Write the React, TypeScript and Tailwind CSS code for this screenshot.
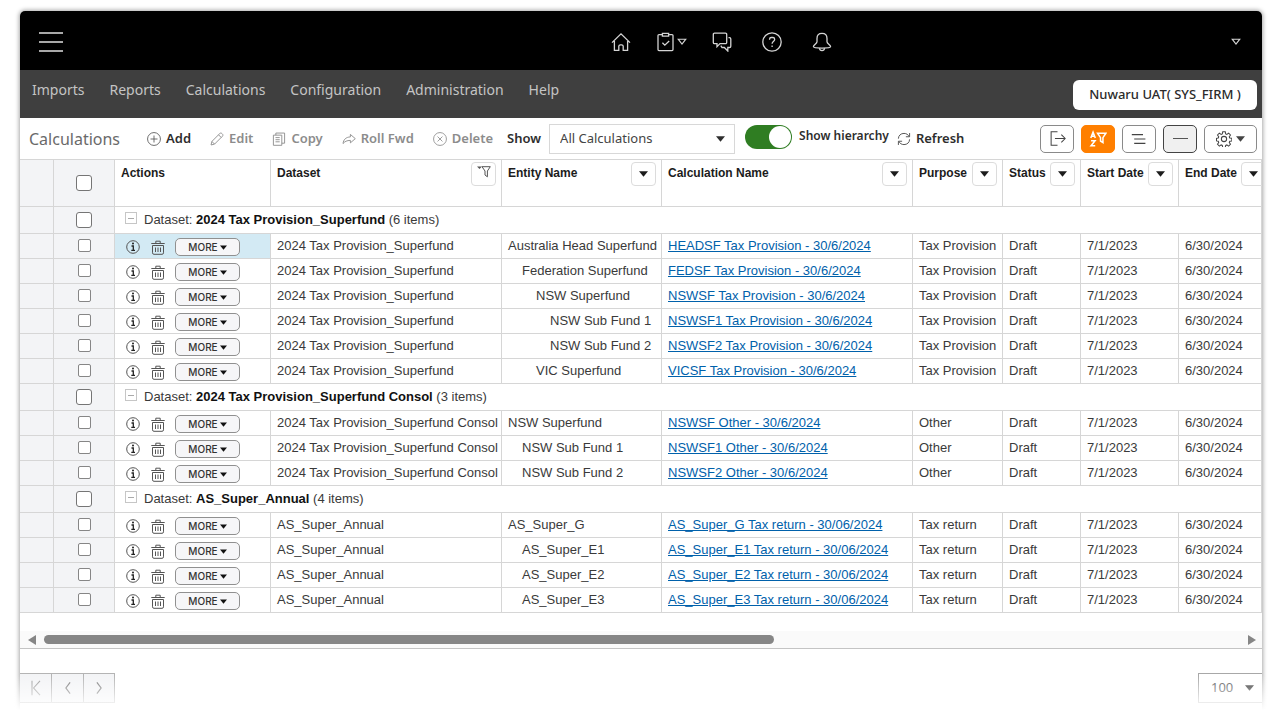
import React from 'react';
import clsx from 'clsx';

interface CalculationRow {
  entity: string
  level: number
  name: string
}

interface DatasetGroup {
  dataset: string
  purpose: string
  rows: CalculationRow[]
}

const menus = ['Imports', 'Reports', 'Calculations', 'Configuration', 'Administration', 'Help'];

const groups: DatasetGroup[] = [
  {
    dataset: '2024 Tax Provision_Superfund',
    purpose: 'Tax Provision',
    rows: [
      { entity: 'Australia Head Superfund', level: 0, name: 'HEADSF Tax Provision - 30/6/2024' },
      { entity: 'Federation Superfund', level: 1, name: 'FEDSF Tax Provision - 30/6/2024' },
      { entity: 'NSW Superfund', level: 2, name: 'NSWSF Tax Provision - 30/6/2024' },
      { entity: 'NSW Sub Fund 1', level: 3, name: 'NSWSF1 Tax Provision - 30/6/2024' },
      { entity: 'NSW Sub Fund 2', level: 3, name: 'NSWSF2 Tax Provision - 30/6/2024' },
      { entity: 'VIC Superfund', level: 2, name: 'VICSF Tax Provision - 30/6/2024' },
    ],
  },
  {
    dataset: '2024 Tax Provision_Superfund Consol',
    purpose: 'Other',
    rows: [
      { entity: 'NSW Superfund', level: 0, name: 'NSWSF Other - 30/6/2024' },
      { entity: 'NSW Sub Fund 1', level: 1, name: 'NSWSF1 Other - 30/6/2024' },
      { entity: 'NSW Sub Fund 2', level: 1, name: 'NSWSF2 Other - 30/6/2024' },
    ],
  },
  {
    dataset: 'AS_Super_Annual',
    purpose: 'Tax return',
    rows: [
      { entity: 'AS_Super_G', level: 0, name: 'AS_Super_G Tax return - 30/06/2024' },
      { entity: 'AS_Super_E1', level: 1, name: 'AS_Super_E1 Tax return - 30/06/2024' },
      { entity: 'AS_Super_E2', level: 1, name: 'AS_Super_E2 Tax return - 30/06/2024' },
      { entity: 'AS_Super_E3', level: 1, name: 'AS_Super_E3 Tax return - 30/06/2024' },
    ],
  },
];

const indents = ['pl-[6px]', 'pl-[20px]', 'pl-[34px]', 'pl-[48px]'];

const columns = [
  { title: 'Dataset', icon: 'filter' },
  { title: 'Entity Name', icon: 'caret' },
  { title: 'Calculation Name', icon: 'caret' },
  { title: 'Purpose', icon: 'caret' },
  { title: 'Status', icon: 'caret' },
  { title: 'Start Date', icon: 'caret' },
  { title: 'End Date', icon: 'caret' },
];

interface IconProps {
  size?: number
  width?: number
  className?: string
  children: React.ReactNode
}

function Icon({ size = 16, width = 1, className, children }: IconProps) {
  return (
    <svg
      width={size}
      height={size}
      viewBox="0 0 20 20"
      fill="none"
      stroke="currentColor"
      strokeWidth={width}
      className={clsx('shrink-0', className)}
      aria-hidden="true"
    >
      {children}
    </svg>
  );
}

function Caret({ className = 'h-[6px] w-[9px]' }: { className?: string }) {
  return (
    <svg viewBox="0 0 9 6" className={clsx('shrink-0', className)} fill="currentColor" aria-hidden="true">
      <path d="M0 0.3h9L4.5 5.8z" />
    </svg>
  );
}

function HollowCaret() {
  return (
    <svg viewBox="0 0 10 8" className="h-2 w-[10px] shrink-0" fill="none" stroke="currentColor" strokeWidth="1.1" aria-hidden="true">
      <path d="M1.2 1.2h7.6L5 6.2z" />
    </svg>
  );
}

function CheckBox({ label, large = false }: { label: string, large?: boolean }) {
  return (
    <input
      type="checkbox"
      aria-label={label}
      className={clsx(
        'block appearance-none border bg-white',
        large ? 'size-4 rounded-[3px] border-[#757575]' : 'mb-[2px] size-[13px] rounded-[2px] border-[#868686]',
      )}
    />
  );
}

function TopBar() {
  return (
    <header className="flex h-[59px] items-center bg-black pt-[3px] pr-[21px] pl-[19px] text-[#d4d4d4]">
      <button type="button" aria-label="Menu" className="flex w-6 flex-col gap-[7px]">
        <span className="h-[2px] bg-[#a8a8a8]" />
        <span className="h-[2px] bg-[#a8a8a8]" />
        <span className="h-[2px] bg-[#a8a8a8]" />
      </button>
      <div className="ml-[45.6%] flex items-center gap-[25px]">
        <button type="button" aria-label="Home">
          <Icon size={20} width={1.3}>
            <path d="M1 10.6L10 1.8l9 8.8M3.4 9v9.4h4.4v-4.2a1.6 1.6 0 0 1 1.6-1.4h1.2a1.6 1.6 0 0 1 1.6 1.4v4.2h4.4V9" />
          </Icon>
        </button>
        <button type="button" aria-label="Tasks" className="flex items-center gap-px">
          <Icon size={20} width={1.3}>
            <path d="M6.4 2.6H3a1 1 0 0 0-1 1v14a1 1 0 0 0 1 1h13a1 1 0 0 0 1-1v-14a1 1 0 0 0-1-1h-3.4M6.4 1.4h6.2v2.8H6.4zM6.4 10.8l2.4 2.4 4.4-4.2" />
          </Icon>
          <HollowCaret />
        </button>
        <button type="button" aria-label="Messages">
          <Icon size={20} width={1.3}>
            <path d="M2.5 1.2h11a1.2 1.2 0 0 1 1.2 1.2v8a1.2 1.2 0 0 1-1.2 1.2H8l-3 3v-3H2.5a1.2 1.2 0 0 1-1.2-1.2v-8a1.2 1.2 0 0 1 1.2-1.2z" />
            <path d="M16.5 5.6h1a1.3 1.3 0 0 1 1.3 1.3v7.3a1.3 1.3 0 0 1-1.3 1.3h-1.7v3.5l-3.5-3.5H10l-1.2-1.8" />
          </Icon>
        </button>
        <button type="button" aria-label="Help" className="ml-[5px]">
          <Icon size={20} width={1.3}>
            <circle cx="10" cy="10" r="9.2" />
            <path d="M7.6 7.7V7a1.6 1.6 0 0 1 1.6-1.5h1.8A1.6 1.6 0 0 1 12.6 7v.8c0 1.4-2.5 1.7-2.5 4M10.1 13.6v1.4" />
          </Icon>
        </button>
        <button type="button" aria-label="Notifications" className="ml-[5px]">
          <Icon size={20} width={1.3}>
            <path d="M10 1.4c-3.2 0-5 2.2-5 5v3.4c0 2-3.6 3-3.6 5 0 .6 2 1.3 8.6 1.3s8.6-.7 8.6-1.3c0-2-3.6-3-3.6-5V6.4c0-2.8-1.8-5-5-5z" />
            <path d="M7.4 16.2c.2 1.5 1.2 2.5 2.6 2.5s2.4-1 2.6-2.5" />
          </Icon>
        </button>
      </div>
      <button type="button" aria-label="Account" className="ml-auto"><HollowCaret /></button>
    </header>
  );
}

function MenuBar() {
  return (
    <nav className="flex h-12 items-start justify-between bg-[#3f3f3f] pr-[5px] pl-3 font-['Noto_Sans',sans-serif]">
      <div className="flex gap-[25px] pt-[10px] text-sm leading-5 text-[#c4c4c4]">
        {menus.map((menu) => (
          <a key={menu} href="#">{menu}</a>
        ))}
      </div>
      <button type="button" className="mt-[10px] h-[30px] w-[184px] rounded-md bg-white text-[13px] font-medium text-[#2b2b2b]">
        Nuwaru UAT( SYS_FIRM )
      </button>
    </nav>
  );
}

interface ToolButtonProps {
  label: string
  active?: boolean
  children: React.ReactNode
}

function ToolButton({ label, active = false, children }: ToolButtonProps) {
  return (
    <button
      type="button"
      className={clsx('flex items-center gap-[5px] font-semibold whitespace-nowrap', active ? 'text-[#2e2e2e]' : 'text-[#8c8c8c]')}
    >
      {children}
      {label}
    </button>
  );
}

function Toolbar() {
  const square = 'flex h-7 w-[34px] items-center justify-center rounded-[5px] border';

  return (
    <div className="flex h-[41px] items-center justify-between pr-[5px] pl-[9px] font-['Noto_Sans',sans-serif] text-[13px] text-[#2e2e2e]">
      <div className="flex items-center">
        <h1 className="mr-[27px] text-base text-[#6a6a6a]">Calculations</h1>
        <div className="flex items-center gap-[19px]">
          <ToolButton label="Add" active>
            <Icon size={14} width={1.2} className="text-[#555]">
              <circle cx="10" cy="10" r="9.2" />
              <path d="M10 5v10M5 10h10" />
            </Icon>
          </ToolButton>
          <ToolButton label="Edit">
            <Icon size={14} width={1.3}>
              <path d="M1.5 18.5l1.2-5L14 2.2c.9-.9 2.2-.9 3 0l.8.8c.8.8.8 2.1 0 3L6.5 17.3zM12.2 4l3.8 3.8M2.7 13.5l3.8 3.8" />
            </Icon>
          </ToolButton>
          <ToolButton label="Copy">
            <Icon size={14} width={1.3}>
              <path d="M2 4.5h12V19H2zM5.5 4.5v-3H18V16h-4M5 8h6M5 11h6M5 14h6" />
            </Icon>
          </ToolButton>
          <ToolButton label="Roll Fwd">
            <Icon size={14} width={1.3}>
              <path d="M12 3.5l7 6-7 6V12c-5 0-8 1.5-10.500 4.500.5-5.500 4-9.200 10.500-9.500z" />
            </Icon>
          </ToolButton>
          <ToolButton label="Delete">
            <Icon size={14} width={1.2}>
              <circle cx="10" cy="10" r="9.2" />
              <path d="M6.5 6.5l7 7M13.5 6.5l-7 7" />
            </Icon>
          </ToolButton>
        </div>
        <label htmlFor="show" className="mr-2 ml-[14px] font-semibold">Show</label>
        <div className="relative">
          <select id="show" className="h-[30px] w-[186px] appearance-none border border-[#d8d8d8] bg-white pl-[10px] text-[13px] text-[#444]">
            <option>All Calculations</option>
          </select>
          <Caret className="pointer-events-none absolute top-3 right-[10px] h-[6px] w-[9px]" />
        </div>
        <input
          id="hierarchy"
          type="checkbox"
          role="switch"
          defaultChecked
          className="mr-[7px] mb-1 ml-[10px] flex h-6 w-[47px] appearance-none items-center justify-end rounded-full bg-[#2f7d22] p-px before:size-[22px] before:rounded-full before:bg-white"
        />
        <label htmlFor="hierarchy" className="mr-2 mb-[6px] text-xs font-semibold whitespace-nowrap">Show hierarchy</label>
        <ToolButton label="Refresh" active>
          <Icon size={14} width={1.4} className="text-[#555]">
            <path d="M2 9.5C2 5 5.500 2 10 2c3.500 0 6 1.800 7.300 4.500M18 1.500v5.300h-5.300M18 10.500c0 4.500-3.500 7.500-8 7.500-3.500 0-6-1.800-7.300-4.500M2 18.500v-5.300h5.300" />
          </Icon>
        </ToolButton>
      </div>
      <div className="flex items-center gap-[7px] text-[#444]">
        <button type="button" aria-label="Export" className={clsx(square, 'border-[#8a8a8a]')}>
          <Icon size={17} width={1.2}>
            <path d="M10 2H2.5v16H10M7 10h12M14.5 5.5L19 10l-4.5 4.5" />
          </Icon>
        </button>
        <button type="button" aria-label="Sort and filter" className={clsx(square, 'border-[#ff7f00] bg-[#ff7f00] text-white')}>
          <Icon size={18} width={1.7}>
            <path d="M2 9l2.5-6.5L7 9M2.8 7h3.4M2.3 12h4.4l-4.4 5.5h4.6M9.5 3.5h9.3l-3.3 5V14l-2.7-1.8V8.5z" />
          </Icon>
        </button>
        <button type="button" aria-label="Row density" className={clsx(square, 'border-[#8a8a8a]')}>
          <Icon size={16} width={1.5}>
            <path d="M1 4.5h14M4 10h14M4 15.5h14" />
          </Icon>
        </button>
        <button type="button" aria-label="Collapse all" className={clsx(square, 'border-[#444] bg-[#f0f0f0]')}>
          <span className="h-px w-[15px] bg-[#555]" />
        </button>
        <button type="button" aria-label="Settings" className="flex h-7 w-[53px] items-center justify-center gap-1 rounded-[5px] border border-[#8a8a8a]">
          <Icon size={16} width={1.3}>
            <path d="M8.4 1h3.2l.5 2.6 1.500.6 2.200-1.500 2.300 2.300-1.500 2.200.6 1.500 2.600.5v3.200l-2.600.5-.6 1.500 1.500 2.200-2.300 2.300-2.200-1.500-1.500.6-.5 2.600H8.400l-.5-2.600-1.500-.6-2.200 1.500-2.300-2.300 1.500-2.200-.6-1.500L.600 12.400V9.200l2.200-.5.6-1.500L1.900 5l2.300-2.300 2.200 1.500 1.500-.6z" />
            <circle cx="10" cy="10" r="3.3" />
          </Icon>
          <Caret />
        </button>
      </div>
    </div>
  );
}

function RowActions() {
  return (
    <div className="flex items-center pt-[2px] pl-[11px] text-[#555]">
      <button type="button" aria-label="Info">
        <svg width="14" height="14" viewBox="0 0 14 14" fill="none" stroke="currentColor" aria-hidden="true">
          <circle cx="7" cy="7" r="6.3" />
          <path d="M5.5 6h1.8v4.3M5.3 10.3h3.7" stroke="#222" strokeWidth="1.3" />
          <circle cx="7" cy="3.6" r="1" fill="#222" stroke="none" />
        </svg>
      </button>
      <button type="button" aria-label="Delete" className="ml-[11px]">
        <svg width="14" height="15" viewBox="0 0 14 15" fill="none" stroke="currentColor" aria-hidden="true">
          <path d="M.3 3.5h13.4M4.8 3.3V1.200h4.400v2.100M1.500 5.500v7.300a1.500 1.500 0 0 0 1.500 1.500h8a1.500 1.500 0 0 0 1.500-1.500V5.500zM4.500 7.500v4.500M7 7.500v4.500M9.500 7.500v4.500" />
        </svg>
      </button>
      <button
        type="button"
        className="ml-[10px] flex h-[18px] w-[65px] items-center justify-center gap-[2px] rounded-[5px] border border-[#909090] bg-[#f6f6f8] font-['Inter',sans-serif] text-[10px] font-medium text-[#333]"
      >
        MORE
        <Caret className="h-[5px] w-[7px] text-[#111]" />
      </button>
    </div>
  );
}

function DatasetRows({ group, first }: { group: DatasetGroup, first: boolean }) {
  const cell = 'border-r border-b border-[#d6d6d6] whitespace-nowrap';
  const gutter = clsx(cell, 'bg-[#f3f4f6]');

  return (
    <tbody>
      <tr className="h-[27px]">
        <td className={gutter} />
        <td className={clsx(gutter, 'pl-[22px]')}><CheckBox large label={`Select ${group.dataset}`} /></td>
        <td colSpan={8} className={clsx(cell, 'pl-[10px]')}>
          <div className="flex items-center gap-[7px]">
            <button type="button" aria-label="Collapse" className="mb-1 flex size-3 items-center justify-center border border-[#c6c6c6]">
              <span className="h-px w-[6px] bg-[#aaa]" />
            </button>
            <p>
              {'Dataset: '}
              <b className="text-[#111]">{group.dataset}</b>
              {` (${group.rows.length} items)`}
            </p>
          </div>
        </td>
      </tr>
      {group.rows.map((row, i) => (
        <tr key={row.name} className="h-[25px]">
          <td className={gutter} />
          <td className={clsx(gutter, 'pl-[24px]')}><CheckBox label={`Select ${row.name}`} /></td>
          <td className={clsx(cell, first && i === 0 && 'bg-[#d3eaf4]')}><RowActions /></td>
          <td className={clsx(cell, 'pl-[6px]')}>{group.dataset}</td>
          <td className={clsx(cell, indents[row.level])}>{row.entity}</td>
          <td className={clsx(cell, 'pl-[6px]')}>
            <a href="#" className="text-[#0061ab] underline">{row.name}</a>
          </td>
          <td className={clsx(cell, 'pl-[6px]')}>{group.purpose}</td>
          <td className={clsx(cell, 'pl-[6px]')}>Draft</td>
          <td className={clsx(cell, 'pl-[6px]')}>7/1/2023</td>
          <td className={clsx(cell, 'pl-[6px]')}>6/30/2024</td>
        </tr>
      ))}
    </tbody>
  );
}

function Grid() {
  const head = 'border-r border-b border-[#d6d6d6] p-0 align-top';

  return (
    <div className="overflow-hidden">
      <table className="w-full table-fixed border-separate border-spacing-0 border-t border-[#d6d6d6] text-[13px] leading-4 text-[#3a3a3a]">
        <colgroup>
          <col className="w-[34px]" />
          <col className="w-[61px]" />
          <col className="w-[156px]" />
          <col className="w-[231px]" />
          <col className="w-[160px]" />
          <col className="w-[251px]" />
          <col className="w-[90px]" />
          <col className="w-[78px]" />
          <col className="w-[98px]" />
          <col />
        </colgroup>
        <thead>
          <tr className="h-[47px] text-left text-xs text-[#1c1c1c]">
            <td className={clsx(head, 'bg-[#f3f4f6]')} />
            <td className={clsx(head, 'bg-[#f3f4f6] pt-[15px] pl-[22px]')}><CheckBox large label="Select all" /></td>
            <th className={head}><p className="pt-[5px] pl-[6px]">Actions</p></th>
            {columns.map((column) => (
              <th key={column.title} className={head}>
                <div className="flex items-start justify-between gap-1 pt-[2px] pr-[5px] pl-[6px] whitespace-nowrap">
                  <span className="pt-[3px]">{column.title}</span>
                  <button
                    type="button"
                    aria-label={`${column.title} options`}
                    className="flex h-6 w-[25px] shrink-0 items-center justify-center rounded-[4px] border border-[#dcdcdc]"
                  >
                    {column.icon === 'filter' ? (
                      <svg width="14" height="12" viewBox="0 0 14 12" fill="none" stroke="#555" className="mb-1" aria-hidden="true">
                        <path d="M5 .7h8.300L10.400 5v5.800L8 9V5z" />
                        <path d="M0 .5h5L2.500 3z" fill="#555" stroke="none" />
                      </svg>
                    ) : <Caret />}
                  </button>
                </div>
              </th>
            ))}
          </tr>
        </thead>
        {groups.map((group, i) => (
          <DatasetRows key={group.dataset} group={group} first={i === 0} />
        ))}
      </table>
      <div className="mt-[18px] flex h-[18px] items-center justify-between border-b border-[#c4c4c4] bg-[#fafafa] pr-[6px] pl-2 text-[#868686]">
        <button type="button" aria-label="Scroll left">
          <svg width="8" height="10" viewBox="0 0 8 10" fill="currentColor" aria-hidden="true"><path d="M8 0v10L0 5z" /></svg>
        </button>
        <div className="mx-2 flex-1">
          <div className="h-[9px] w-[61%] rounded-full bg-[#868686]" />
        </div>
        <button type="button" aria-label="Scroll right">
          <svg width="8" height="10" viewBox="0 0 8 10" fill="currentColor" aria-hidden="true"><path d="M0 0v10l8-5z" /></svg>
        </button>
      </div>
    </div>
  );
}

function Pager() {
  const button = 'flex h-7 items-center justify-center border-r border-[#b4b4b4]';

  return (
    <footer className="relative flex items-start justify-between pt-6 pb-[10px]">
      <div className="flex border-y border-[#b4b4b4] bg-[#f3f4f6] text-[#777]">
        <button type="button" aria-label="First page" className={clsx(button, 'w-8 text-[#999]')}>
          <Icon size={16} width={1.3}><path d="M5 1v18M15 1L7 10l8 9" /></Icon>
        </button>
        <button type="button" aria-label="Previous page" className={clsx(button, 'w-8')}>
          <Icon size={14} width={1.7}><path d="M13 2l-6 8 6 8" /></Icon>
        </button>
        <button type="button" aria-label="Next page" className={clsx(button, 'w-[31px]')}>
          <Icon size={14} width={1.7}><path d="M7 2l6 8-6 8" /></Icon>
        </button>
      </div>
      <div className="relative">
        <select aria-label="Rows per page" className="h-[30px] w-16 appearance-none border border-r-0 border-[#a8a8a8] bg-white pl-3 font-['Noto_Sans',sans-serif] text-[13px] text-[#555]">
          <option>100</option>
        </select>
        <Caret className="pointer-events-none absolute top-3 right-2 h-[6px] w-[9px] text-[#333]" />
      </div>
      <div className="pointer-events-none absolute inset-x-[-6px] bottom-[-6px] h-11 bg-linear-to-b from-transparent to-white to-80%" />
    </footer>
  );
}

function App() {
  return (
    <div className="bg-white pt-[11px] pr-[18px] pb-[11px] pl-5 font-['Liberation_Sans',Arial,sans-serif]">
      <main className="rounded-t-[5px] bg-white shadow-[0_0_4px_1px_rgba(0,0,0,0.35)]">
        <div className="overflow-hidden rounded-t-[5px]">
          <TopBar />
          <MenuBar />
        </div>
        <Toolbar />
        <Grid />
        <Pager />
      </main>
    </div>
  );
}

export default App;
